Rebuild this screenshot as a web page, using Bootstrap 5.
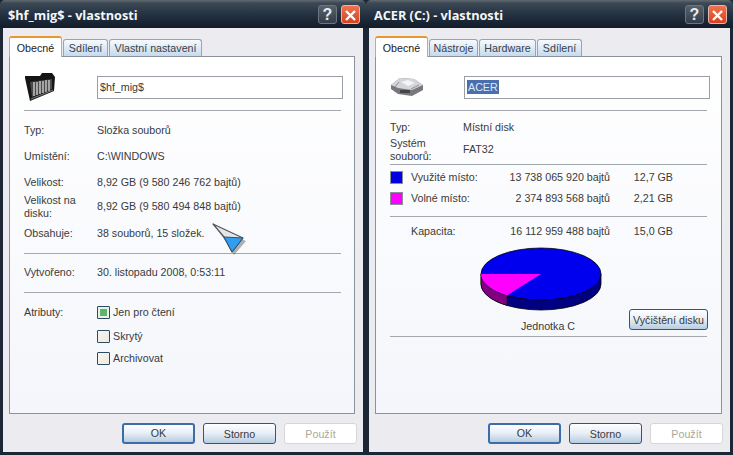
<!DOCTYPE html>
<html lang="cs">
<head>
  <meta charset="UTF-8">
  <title>Vlastnosti</title>
  <meta name="viewport" content="width=device-width, initial-scale=1">
  <link href="https://cdn.jsdelivr.net/npm/bootstrap@5.3.0/dist/css/bootstrap.min.css" rel="stylesheet">
  <style>
    body { width: 733px; height: 455px; overflow: hidden; background: #1b2636; font-family: "Liberation Sans", Arial, sans-serif; font-size: 10.7px; line-height: 13px; color: #3a3a3a; position: relative; }
    .xp-win { height: 455px; border: 3px solid #1b2636; border-top: 0; flex: none; }
    .xp-w1 { width: 366px; }
    .xp-w2 { width: 367px; }
    .xp-title { height: 28px; margin: 0 -3px; padding: 0 6px 0 8px; background: linear-gradient(#626970 0, #3c4955 3px, #253242 14px, #121c2a 100%); border-radius: 5px 5px 0 0; }
    .xp-title-text { font-family: "Open Sans", "Liberation Sans", sans-serif; font-weight: 700; font-size: 12.7px; color: #f4f6f8; padding-top: 2px; }
    .xp-tb { width: 19px; height: 19px; border-radius: 3px; border: 1px solid #6d7680; background: linear-gradient(#57616b, #333e4a); color: #e8ebee; font: 700 16px/17px "Liberation Sans", sans-serif; text-align: center; }
    .xp-tb-x { margin-left: 4px; border-color: #e9b7a8; background: linear-gradient(#ee7350, #d9401f); }
    .xp-client { background: #ecebef; height: 424px; padding: 8px 8px 0 6px; }
    .nav.xp-tabs { height: 20px; border: 0; flex-wrap: nowrap; align-items: flex-end; padding-left: 0; margin-bottom: 0; gap: 1px; position: relative; z-index: 1; }
    .xp-tabs .nav-link { height: 17px; padding: 1px 0 0; text-align: center; margin: 0; color: #3a4048; border: 1px solid #90a6bc; border-bottom: 0; border-radius: 3px 3px 0 0; background: linear-gradient(#f7fafd, #c5daef); font-size: 10.7px; line-height: 14px; }
    .xp-tabs .nav-link.active { height: 21px; margin-bottom: -1px; padding-top: 3px; color: #222; background: #fff; border-color: #a6b0ba; border-top: 2px solid #e8962f; }
    .xp-pane { height: 358px; border: 1px solid #8b929b; background: linear-gradient(#fff, #f4f6fb); padding: 15px 14px 0 14px; }
    .xp-head { height: 30px; }
    .xp-icon { width: 73px; flex: none; }
    .xp-name.form-control { width: 246px; height: 23px; min-height: 0; flex: none; padding: 0 2px; border: 1px solid #9a9fa6; border-radius: 0; font-size: 10.7px; line-height: 21px; color: #3a3a3a; background: #fff; box-shadow: none; }
    .xp-name-sel { width: 246px; margin-left: 1px; flex: none; padding: 0 2px; height: 23px; border: 1px solid #9a9fa6; background: #fff; line-height: 21px; }
    .xp-sel { background: #4a6fae; color: #dfe8f5; padding: 1px; }
    hr.xp-rule { margin: 0; border: 0; border-top: 1px solid #a3a8ae; opacity: 1; width: 317px; }
    .xp-row { height: 18px; align-items: center; }
    .xp-row2 { height: 25px; }
    .xp-lab { width: 73px; flex: none; }
    .s1 { margin-top: 1px; } .s3 { margin-top: 3px; } .s4 { margin-top: 4px; } .s5 { margin-top: 5px; }
    .s6 { margin-top: 6px; } .s7 { margin-top: 7px; } .s9 { margin-top: 9px; } .s10 { margin-top: 10px; } .s11 { margin-top: 11px; } .s8 { margin-top: 8px; } .s2 { margin-top: 2px; }
    hr.s2 { margin-top: 2px; } hr.s8 { margin-top: 8px; } hr.s9 { margin-top: 9px; } hr.s11 { margin-top: 11px; }
    .xp-check.form-check-input { width: 13px; height: 13px; margin: 0 3px 0 0; border: 1px solid #2f4a63; border-radius: 1px; background: linear-gradient(135deg, #f4f5f4, #efe9dd); flex: none; }
    .xp-check.form-check-input:checked { background: #5cb56d; box-shadow: inset 0 0 0 2px #e9efe9; border-color: #2f4a63; }
    .xp-sw { width: 13px; height: 13px; border: 1px solid #8a8f96; margin-right: 8px; flex: none; }
    .xp-sw-used { background: #0000e0; }
    .xp-sw-free { background: #ff00ff; }
    .xp-k { width: 79px; flex: none; }
    .xp-v { width: 120px; flex: none; text-align: right; }
    .xp-g { width: 63px; flex: none; text-align: right; }
    .xp-pie-row { height: 87px; padding-left: 90px; }
    .xp-pie-cap { text-align: center; padding-left: 12px; margin-top: 9px; }
    .btn.xp-btn { width: 73px; height: 21px; padding: 0; font-size: 10.7px; line-height: 18px; color: #3a3a3a; border: 1px solid #31557f; border-radius: 3px; background: linear-gradient(#fdfeff, #e9f0f7 45%, #b8cce0); }
    .btn.xp-btn-def { border: 2px solid #3b6ea8; line-height: 17px; }
    .btn.xp-btn-off { border-color: #d6d6da; background: #fff; color: #aca899; opacity: 1; }
    .btn.xp-clean { width: 79px; height: 21px; margin-top: 62px; padding: 0; margin-left: auto; margin-right: -1px; white-space: nowrap; }
    .xp-foot { padding-top: 9px; gap: 8px; margin-right: -2px; }
    .xp-w2 .xp-foot { margin-right: -1px; }
    .xp-cursor { position: absolute; left: 212px; top: 222px; }
  </style>
</head>
<body>

<div class="d-flex">
  <!-- $hf_mig$ -->
  <div class="xp-win xp-w1">
    <div class="xp-title d-flex align-items-center justify-content-between">
      <span class="xp-title-text">$hf_mig$ - vlastnosti</span>
      <div class="d-flex"><div class="xp-tb">?</div><div class="xp-tb xp-tb-x"><svg width="13" height="13" viewBox="0 0 13 13"><path d="M2 2l9 9M11 2l-9 9" stroke="#fff" stroke-width="2.4" fill="none"/></svg></div></div>
    </div>
    <div class="xp-client">
      <ul class="nav xp-tabs">
        <li class="nav-item"><a class="nav-link active" style="width:53px">Obecné</a></li>
        <li class="nav-item"><a class="nav-link" style="width:45px">Sdílení</a></li>
        <li class="nav-item"><a class="nav-link" style="width:93px">Vlastní nastavení</a></li>
      </ul>
      <div class="xp-pane">
        <div class="xp-head d-flex align-items-center">
          <div class="xp-icon">
            <svg class="d-block" width="32" height="30" viewBox="0 0 32 30">
              <path d="M1 6L6 29 30 19 31 5 28 1H18L16 4H1Z" fill="#151515"/>
              <path d="M8 25L28 17V7L6 10Z" fill="#4a4a4a"/>
              <path d="M10 24V10M13 23V10M16 22V9M19 21V9M22 20V8M25 19V8" stroke="#d4d4d4" stroke-width="1.3"/>
              <path d="M7 27L29 18" stroke="#777" stroke-width="1.2"/>
            </svg>
          </div>
          <input class="form-control xp-name" type="text" value="$hf_mig$">
        </div>
        <hr class="xp-rule s8">
        <div class="d-flex xp-row s10"><div class="xp-lab">Typ:</div><div>Složka souborů</div></div>
        <div class="d-flex xp-row s8"><div class="xp-lab">Umístění:</div><div>C:\WINDOWS</div></div>
        <div class="d-flex xp-row s8"><div class="xp-lab">Velikost:</div><div>8,92 GB (9 580 246 762 bajtů)</div></div>
        <div class="d-flex xp-row xp-row2 s3"><div class="xp-lab">Velikost na disku:</div><div>8,92 GB (9 580 494 848 bajtů)</div></div>
        <div class="d-flex xp-row s5"><div class="xp-lab">Obsahuje:</div><div>38 souborů, 15 složek.</div></div>
        <hr class="xp-rule s11">
        <div class="d-flex xp-row s9"><div class="xp-lab">Vytvořeno:</div><div>30. listopadu 2008, 0:53:11</div></div>
        <hr class="xp-rule s11">
        <div class="d-flex xp-row s10"><div class="xp-lab">Atributy:</div><input class="form-check-input xp-check" type="checkbox" checked><div>Jen pro čtení</div></div>
        <div class="d-flex xp-row s6"><div class="xp-lab"></div><input class="form-check-input xp-check" type="checkbox"><div>Skrytý</div></div>
        <div class="d-flex xp-row s4"><div class="xp-lab"></div><input class="form-check-input xp-check" type="checkbox"><div>Archivovat</div></div>
      </div>
      <div class="xp-foot d-flex justify-content-end">
        <button class="btn xp-btn xp-btn-def">OK</button>
        <button class="btn xp-btn">Storno</button>
        <button class="btn xp-btn xp-btn-off" disabled>Použít</button>
      </div>
    </div>
  </div>

  <!-- ACER (C:) -->
  <div class="xp-win xp-w2">
    <div class="xp-title d-flex align-items-center justify-content-between">
      <span class="xp-title-text">ACER (C:) - vlastnosti</span>
      <div class="d-flex"><div class="xp-tb">?</div><div class="xp-tb xp-tb-x"><svg width="13" height="13" viewBox="0 0 13 13"><path d="M2 2l9 9M11 2l-9 9" stroke="#fff" stroke-width="2.4" fill="none"/></svg></div></div>
    </div>
    <div class="xp-client">
      <ul class="nav xp-tabs">
        <li class="nav-item"><a class="nav-link active" style="width:53px">Obecné</a></li>
        <li class="nav-item"><a class="nav-link" style="width:49px">Nástroje</a></li>
        <li class="nav-item"><a class="nav-link" style="width:57px">Hardware</a></li>
        <li class="nav-item"><a class="nav-link" style="width:45px">Sdílení</a></li>
      </ul>
      <div class="xp-pane">
        <div class="xp-head d-flex align-items-center">
          <div class="xp-icon">
            <svg class="d-block" width="34" height="20" viewBox="0 0 34 20">
              <path d="M1 8L10 1 24 2 33 8V13L22 19 8 17 1 12Z" fill="#77777c"/>
              <path d="M1 8L10 1 24 2 33 8 22 13 8 11Z" fill="#d4d5d8"/>
              <path d="M11 5L18 3 25 6 18 9Z" fill="#f4f4f5"/>
              <path d="M5 10L9 5M21 12L29 8" stroke="#8f8f94" stroke-width="1"/>
              <path d="M10 13H20V16H10Z" fill="#44444a"/>
            </svg>
          </div>
          <div class="xp-name-sel"><span class="xp-sel">ACER</span></div>
        </div>
        <hr class="xp-rule s8">
        <div class="d-flex xp-row s7"><div class="xp-lab">Typ:</div><div>Místní disk</div></div>
        <div class="d-flex xp-row xp-row2 s1"><div class="xp-lab">Systém souborů:</div><div>FAT32</div></div>
        <hr class="xp-rule s2">
        <div class="d-flex xp-row s3"><div class="xp-sw xp-sw-used"></div><div class="xp-k">Využité místo:</div><div class="xp-v">13 738 065 920 bajtů</div><div class="xp-g">12,7 GB</div></div>
        <div class="d-flex xp-row s3"><div class="xp-sw xp-sw-free"></div><div class="xp-k">Volné místo:</div><div class="xp-v">2 374 893 568 bajtů</div><div class="xp-g">2,21 GB</div></div>
        <hr class="xp-rule s9">
        <div class="d-flex xp-row s5"><div class="xp-sw border-0"></div><div class="xp-k">Kapacita:</div><div class="xp-v">16 112 959 488 bajtů</div><div class="xp-g">15,0 GB</div></div>
        <div class="d-flex xp-pie-row s7">
          <div>
            <svg class="d-block" width="124" height="64" viewBox="0 0 124 64">
              <path d="M1 27V37A60 26 0 0 0 121 37V27Z" fill="#000080" stroke="#000" stroke-width=".8"/>
              <path d="M1 27V37A60 26 0 0 0 27 58.4V48.4Z" fill="#800080" stroke="#000" stroke-width=".6"/>
              <ellipse cx="61" cy="27" rx="60" ry="26" fill="#0000ee" stroke="#000" stroke-width=".8"/>
              <path d="M61 27H1A60 26 0 0 0 27 48.4Z" fill="#ff00ff"/>
            </svg>
            <div class="xp-pie-cap">Jednotka C</div>
          </div>
          <button class="btn xp-btn xp-clean">Vyčištění disku</button>
        </div>
        <hr class="xp-rule s2">
      </div>
      <div class="xp-foot d-flex justify-content-end">
        <button class="btn xp-btn xp-btn-def">OK</button>
        <button class="btn xp-btn">Storno</button>
        <button class="btn xp-btn xp-btn-off" disabled>Použít</button>
      </div>
    </div>
  </div>
</div>

<!-- mouse pointer over the first window -->
<svg class="xp-cursor" width="38" height="36" viewBox="0 0 38 36">
  <path d="M5 7L34 19 22 33 14 20z" fill="#555" opacity=".45"/>
  <path d="M1 2L31 16 20 30 12 15z" fill="#e4e6e6" stroke="#555" stroke-width="1.2" stroke-linejoin="round"/>
  <path d="M12 15L31 16 20 30z" fill="#2f9df0" stroke="#34506a" stroke-width="1"/>
</svg>

<script src="https://cdn.jsdelivr.net/npm/bootstrap@5.3.0/dist/js/bootstrap.bundle.min.js"></script>
</body>
</html>
